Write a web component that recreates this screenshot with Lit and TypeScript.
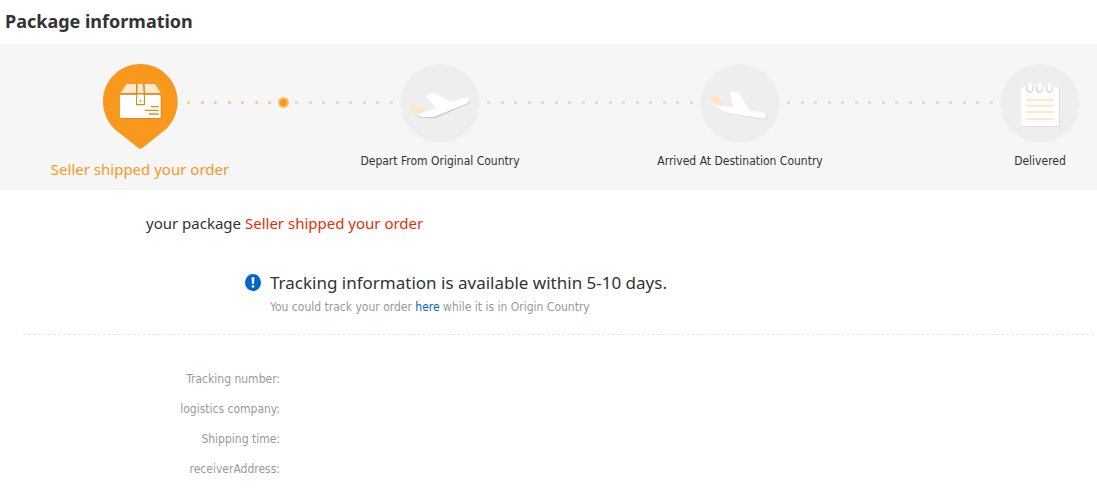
import { LitElement, html, css, svg } from "lit";
import { customElement } from "lit/decorators.js";
import { classMap } from "lit/directives/class-map.js";

const parcelIcon = html`
  <svg class="icon pin" viewBox="15 18 240 264" aria-hidden="true">
    <path fill="#f8981d" d="M136 18C74 18 24 68 24 130C24 164 38 195 61 215L130 270Q136 275 142 270L211 215C234 195 248 164 248 130C248 68 198 18 136 18Z" />
    <path fill="#de8617" d="M79 109H200V183H79Z" />
    <path fill="#fff" d="M75 110H197V180H75Z" />
    <path fill="#ffe8cb" d="M95 78H180L197 105H76Z" />
    <path fill="#e48a15" d="M75 105H198V109H75Z" />
    <path fill="#e48a15" d="M123 78H128L127 109V138H146V109L144 78H149L150 109V142H123V109Z" />
    <path fill="#fff" d="M127 110H146V138H127Z" />
    <path fill="#e48a15" d="M134 126H139V131H134Z" />
    <path stroke="#e48a15" stroke-width="4" d="M168 146H191M149 157H191M162 168H191" />
  </svg>
`;

const departIcon = html`
  <svg class="icon" viewBox="180 42 240 240" aria-hidden="true">
    <circle cx="300" cy="160" r="118" fill="#eee" />
    <path fill="#d3cfcb" d="M257 187L290 177L335 158L380 144Q391 143 391 153Q390 160 383 163L290 203Q282 206 240 203L229 195Z" />
    <path fill="#fff" d="M229 193L257 184L288 174L257 139Q256 136 260 134L275 129Q280 127 285 130L333 156L376 142Q388 139 389 149Q389 157 382 160L288 198Q278 202 240 200Z" />
    <path fill="#ffe5c2" d="M210 176Q209 174 214 173L234 169L258 183L230 193Q227 193 225 191Z" />
  </svg>
`;

const arriveIcon = html`
  <svg class="icon" viewBox="180 42 240 240" aria-hidden="true">
    <circle cx="300" cy="160" r="118" fill="#eee" />
    <path fill="#dcdad8" d="M222 166L262 190L372 209Q380 208 382 200V194L332 184L300 132L290 180Z" />
    <path fill="#fff" d="M217 162L250 168L281 173L270 128Q270 124 275 125L292 127Q297 128 300 133L331 182L373 188Q380 190 379 197Q378 206 370 206L262 188Q255 187 248 182Z" />
    <path fill="#ffe5c2" d="M212 140Q211 136 216 136L229 137Q234 138 237 143L252 167L219 161Z" />
  </svg>
`;

const deliveredIcon = html`
  <svg class="icon" viewBox="120 42 240 240" aria-hidden="true">
    <circle cx="240" cy="160" r="118" fill="#eee" />
    <rect x="186" y="114" width="114" height="117" rx="4" fill="#dcdcdc" />
    <rect x="183" y="111" width="114" height="117" rx="4" fill="#fff" />
    ${[210, 239, 269].map(
      (x) => svg`
        <path fill="#dedede" d=${`M${x - 12} 111H${x + 10}V118A11 11 0 0 1 ${x - 12} 118Z`} />
        <rect x=${x - 6} y="99" width="12" height="25" rx="6" fill="#fff" />
      `
    )}
    <path stroke="#ffe8c8" stroke-width="6" stroke-linecap="round" d="M201 150H279M201 168H279M201 186H279M201 207H279" />
  </svg>
`;

const steps = [
  { label: "Seller shipped your order", icon: parcelIcon, current: true },
  { label: "Depart From Original Country", icon: departIcon, current: false },
  { label: "Arrived At Destination Country", icon: arriveIcon, current: false },
  { label: "Delivered", icon: deliveredIcon, current: false },
];

const DOTS = 16;
const MARKER = 7;

@customElement("progress-track")
export class ProgressTrack extends LitElement {
  static styles = css`
    :host {
      display: block;
      background: #f6f6f6;
    }
    .steps {
      display: flex;
      margin: 0;
      padding: 20px 17px 12px 100px;
      list-style: none;
    }
    .step {
      display: flex;
      flex: none;
      flex-direction: column;
      align-items: center;
      width: 80px;
    }
    .icon {
      display: block;
      width: 80px;
      height: 80px;
    }
    .pin {
      height: 88px;
    }
    .label {
      margin-top: 8px;
      font-size: 12px;
      line-height: 18px;
      color: #333;
      white-space: nowrap;
    }
    .current .label {
      font-family: "Noto Sans", sans-serif;
      font-size: 15px;
      color: #f8981d;
    }
    .dots {
      display: flex;
      flex: 1;
      align-items: center;
      justify-content: space-between;
      height: 77px;
      padding: 0 7px;
    }
    .dot {
      width: 3px;
      height: 3px;
      border-radius: 50%;
      background: #d6d6d6;
    }
    .done {
      background: #fbc478;
    }
    .marker {
      box-sizing: border-box;
      width: 11px;
      height: 11px;
      margin: 0 -4px;
      border: 2px solid #fbbd6a;
      background: #f8981d;
    }
  `;

  private connector(index: number) {
    const active = index === 1;
    return html`
      <li class="dots" aria-hidden="true">
        ${Array.from({ length: DOTS }, (_, i) => {
          const classes = {
            dot: true,
            done: active && i < MARKER,
            marker: active && i === MARKER,
          };
          return html`<span class=${classMap(classes)}></span>`;
        })}
      </li>
    `;
  }

  render() {
    return html`
      <ol class="steps">
        ${steps.map(
          (s, i) => html`
            ${i > 0 ? this.connector(i) : ""}
            <li class=${classMap({ step: true, current: s.current })}>
              ${s.icon}
              <span class="label">${s.label}</span>
            </li>
          `
        )}
      </ol>
    `;
  }
}

@customElement("app-root")
export class AppRoot extends LitElement {
  static styles = css`
    :host {
      display: block;
      font-family: "DejaVu Sans Condensed", "DejaVu Sans", sans-serif;
      font-size: 12px;
      line-height: 18px;
      color: #333;
      background: #fff;
    }
    .title,
    .status,
    .headline {
      margin: 0;
      font-family: "Noto Sans", sans-serif;
      line-height: 24px;
    }
    .title {
      padding: 9px 5px 11px;
      font-size: 18px;
      font-weight: bold;
    }
    .status {
      padding: 21px 0 0 146px;
      font-size: 15px;
    }
    .state {
      color: #e62e04;
    }
    .notice {
      display: flex;
      gap: 9px;
      margin: 0 3px 0 23px;
      padding: 36px 0 18px 222px;
      border-bottom: 1px dashed #e6e6e6;
    }
    .info {
      flex: none;
      width: 16px;
      height: 17px;
      margin-top: 3px;
    }
    .headline {
      font-size: 17px;
      font-weight: normal;
    }
    .hint {
      margin: 3px 0 0;
      color: #999;
    }
    .link {
      color: #06c;
      text-decoration: none;
    }
    .details {
      display: grid;
      grid-template-columns: 280px 1fr;
      row-gap: 12px;
      margin: 0;
      padding: 35px 0 17px;
    }
    .term {
      text-align: right;
      color: #999;
    }
    .value {
      margin: 0;
      padding-left: 8px;
    }
  `;

  render() {
    const fields = ["Tracking number:", "logistics company:", "Shipping time:", "receiverAddress:"];
    return html`
      <h1 class="title">Package information</h1>
      <progress-track></progress-track>
      <p class="status">your package <span class="state">Seller shipped your order</span></p>
      <section class="notice">
        <svg class="info" viewBox="0 0 16 17" aria-hidden="true">
          <ellipse cx="8" cy="8.5" rx="8" ry="8.5" fill="#06c" />
          <path fill="#fff" d="M6.6 3.2H9.4L9 10H7ZM6.8 11.2H9.2V13.4H6.8Z" />
        </svg>
        <div>
          <h2 class="headline">Tracking information is available within 5-10 days.</h2>
          <p class="hint">
            You could track your order <a class="link" href="#">here</a> while it is in Origin Country
          </p>
        </div>
      </section>
      <dl class="details">
        ${fields.map((f) => html`<dt class="term">${f}</dt><dd class="value"></dd>`)}
      </dl>
    `;
  }
}
